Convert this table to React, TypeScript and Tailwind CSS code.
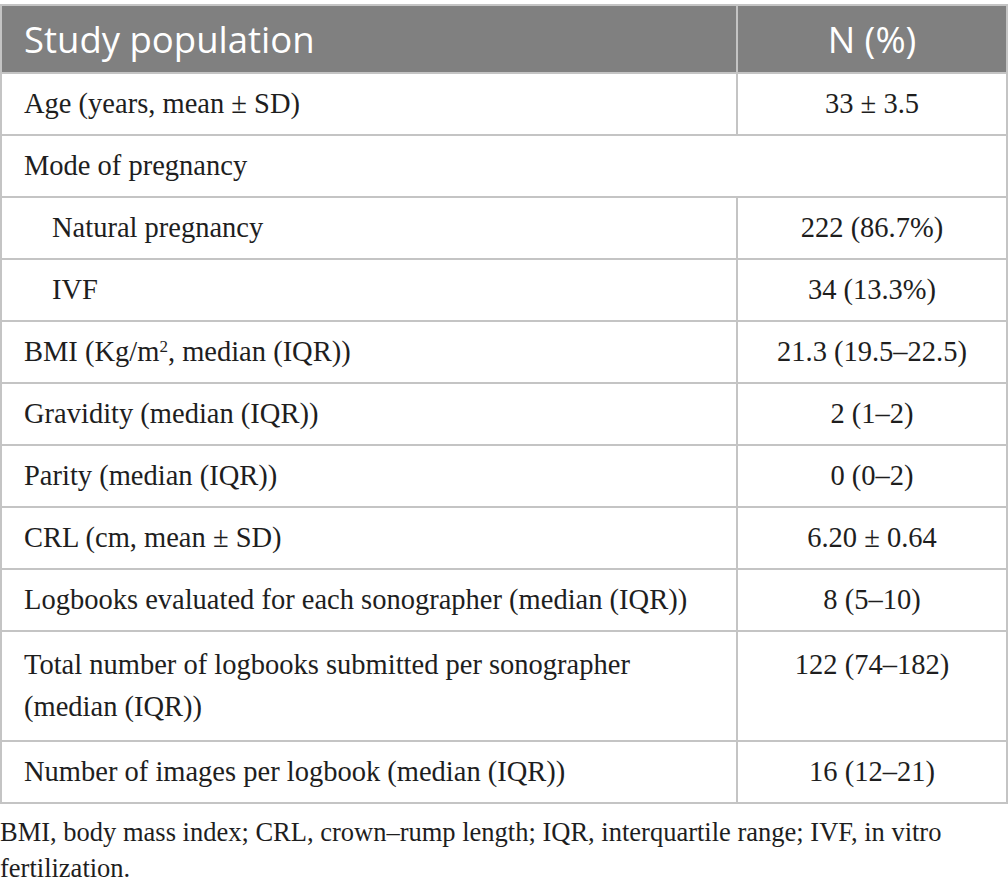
const rows: { label: React.ReactNode; value?: string; indent?: boolean; span?: boolean }[] = [
  { label: "Age (years, mean ± SD)", value: "33 ± 3.5" },
  { label: "Mode of pregnancy", span: true },
  { label: "Natural pregnancy", value: "222 (86.7%)", indent: true },
  { label: "IVF", value: "34 (13.3%)", indent: true },
  {
    label: (
      <>
        BMI (Kg/m<sup className="text-[17px]">2</sup>, median (IQR))
      </>
    ),
    value: "21.3 (19.5–22.5)",
  },
  { label: "Gravidity (median (IQR))", value: "2 (1–2)" },
  { label: "Parity (median (IQR))", value: "0 (0–2)" },
  { label: "CRL (cm, mean ± SD)", value: "6.20 ± 0.64" },
  { label: "Logbooks evaluated for each sonographer (median (IQR))", value: "8 (5–10)" },
  {
    label: (
      <>
        Total number of logbooks submitted per sonographer
        <br />
        (median (IQR))
      </>
    ),
    value: "122 (74–182)",
  },
  { label: "Number of images per logbook (median (IQR))", value: "16 (12–21)" },
];

export default function App() {
  return (
    <div className="w-[1008px] h-[888px] bg-white pt-[4px] text-[#1e1e1e]">
      <table className="w-full border-collapse font-['Liberation_Serif',serif] text-[28.5px]">
        <thead>
          <tr className="bg-[#808080] text-white font-['Open_Sans',sans-serif] text-[36.5px] h-[68px]">
            <th className="text-left font-normal pl-[22px] border-2 border-[#c4c4c4] w-[736px]">Study population</th>
            <th className="font-normal border-2 border-[#c4c4c4]">N (%)</th>
          </tr>
        </thead>
        <tbody>
          {rows.map((r, i) =>
            r.span ? (
              <tr key={i} className="h-[62px]">
                <td colSpan={2} className="pl-[22px] border-2 border-[#c4c4c4] align-middle">
                  {r.label}
                </td>
              </tr>
            ) : (
              <tr key={i} className={i === 9 ? "h-[110px]" : "h-[62px]"}>
                <td
                  className={
                    (r.indent ? "pl-[50px] " : "pl-[22px] ") +
                    (i === 9 ? "align-top pt-[12px] leading-[42px] " : "align-middle ") +
                    "border-2 border-[#c4c4c4]"
                  }
                >
                  {r.label}
                </td>
                <td
                  className={
                    "text-center border-2 border-[#c4c4c4] " +
                    (i === 9 ? "align-top pt-[12px] leading-[42px]" : "align-middle")
                  }
                >
                  {r.value}
                </td>
              </tr>
            )
          )}
        </tbody>
      </table>
      <p className="font-['Liberation_Serif',serif] text-[26.5px] leading-[36px] mt-[10px]">
        BMI, body mass index; CRL, crown–rump length; IQR, interquartile range; IVF, in vitro
        <br />
        fertilization.
      </p>
    </div>
  );
}
